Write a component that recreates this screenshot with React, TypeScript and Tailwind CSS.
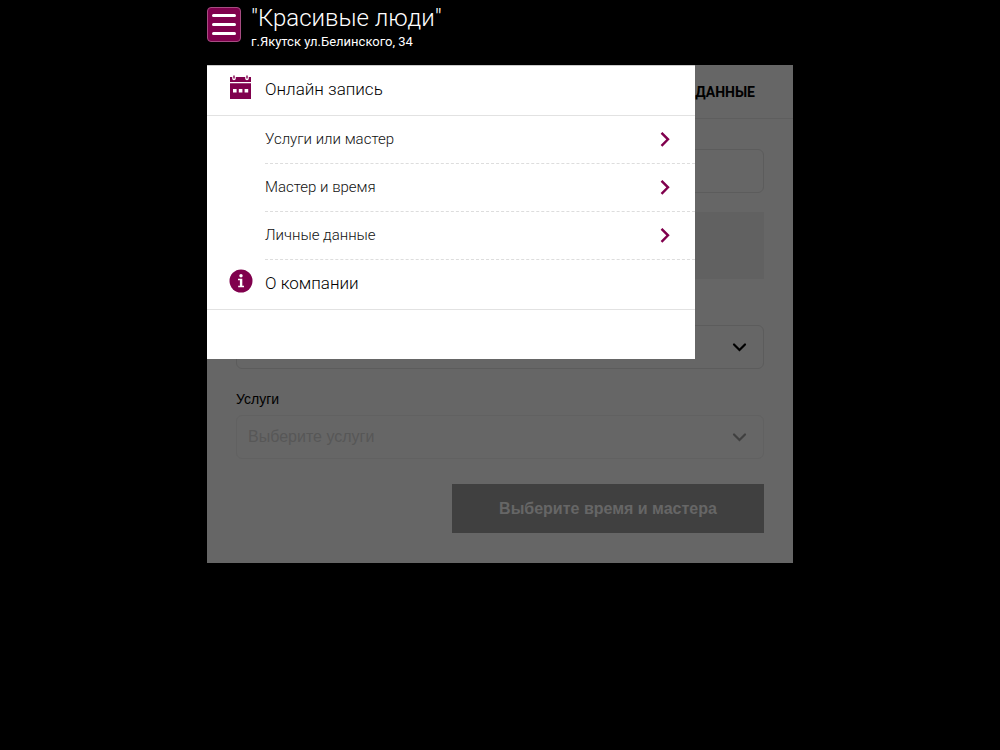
import React from 'react';

const menuSteps = ['Услуги или мастер', 'Мастер и время', 'Личные данные'];

const CalendarIcon = () => (
  <svg className="h-6 w-6 shrink-0" viewBox="0 0 24 24" aria-hidden="true">
    <path fill="#80004d" d="M1 2h2.200v1.500a1.800 1.800 0 0 0 3.600 0V2h9.400v1.500a1.800 1.800 0 0 0 3.600 0V2H22v5H1zM1 8.200h21V24H1z" />
    <path fill="#80004d" d="M4.300.5h1.400v3H4.300zM17.300.5h1.400v3h-1.400z" />
    <path fill="#fff" d="M4 14h3.600v3.600H4zM9.800 14h3.600v3.600H9.800zM15.600 14h3.600v3.600h-3.600z" />
  </svg>
);

const InfoIcon = () => (
  <svg className="h-6 w-6 shrink-0" viewBox="0 0 24 24" aria-hidden="true">
    <circle cx="12" cy="12" r="11.500" fill="#80004d" />
    <circle cx="12" cy="6.800" r="1.700" fill="#fff" />
    <path fill="#fff" d="M9 9.800h4.300v7h1.700V18.300H9.200v-1.500h1.700v-5.500H9z" />
  </svg>
);

const ChevronRight = () => (
  <svg className="h-4 w-3 shrink-0" viewBox="0 0 12 16" fill="none" aria-hidden="true">
    <path d="M2.500.8 9 7.300l-6.500 6.500" stroke="#80004d" strokeWidth="2.400" />
  </svg>
);

const ChevronDown = ({ className }: { className: string }) => (
  <svg
    className={`pointer-events-none absolute top-1/2 right-4 h-4 w-4 -translate-y-1/2 ${className}`}
    viewBox="0 0 16 16"
    fill="none"
    aria-hidden="true"
  >
    <path d="m2 5.500 5.500 5.500L13 5.500" stroke="currentColor" strokeWidth="2.200" strokeLinecap="round" />
  </svg>
);

const SideMenu = () => (
  <nav className="absolute top-0 left-0 w-5/6 border-t border-[#ccc] bg-white pb-[49px]">
    <a href="#booking" className="flex h-[50px] items-start gap-3 border-b border-[#e2e2e2] pt-[9px] pl-[22px] text-[17px] leading-7 text-black">
      <CalendarIcon />
      Онлайн запись
    </a>
    <ul className="pl-[58px]">
      {menuSteps.map((step) => (
        <li key={step}>
          <a
            href="#step"
            className="flex h-12 items-center justify-between border-b border-dashed border-[#ddd] pr-6 text-[15px] text-[#111]"
          >
            {step}
            <ChevronRight />
          </a>
        </li>
      ))}
    </ul>
    <a href="#about" className="flex h-[50px] items-start gap-3 border-b border-[#e2e2e2] pt-[9px] pl-[22px] text-[17px] leading-7 text-black">
      <InfoIcon />
      О компании
    </a>
  </nav>
);

export default function App() {
  return (
    <div className="min-h-screen bg-black font-[Roboto,sans-serif] font-light">
      <div className="mx-auto max-w-[586px]">
        <header className="flex h-[65px] items-start gap-[10px] pt-[7px] text-white">
          <button
            type="button"
            aria-label="Меню"
            className="flex h-[35px] w-[34px] shrink-0 flex-col items-center justify-center gap-[6px] rounded border border-[#a64d82] bg-[#80004d]"
          >
            <span className="h-[3px] w-6 rounded-full bg-white" />
            <span className="h-[3px] w-6 rounded-full bg-white" />
            <span className="h-[3px] w-6 rounded-full bg-white" />
          </button>
          <div className="-mt-[3px]">
            <h1 className="text-2xl leading-7">"Красивые люди"</h1>
            <p className="text-[13px] leading-5 font-normal">г.Якутск ул.Белинского, 34</p>
          </div>
        </header>

        <main className="relative bg-[#666]">
          <div className="flex h-[54px] items-center justify-end border-b border-[#5e5e5e] pr-[38px] text-sm font-bold text-black">
            ДАННЫЕ
          </div>

          <form className="px-[29px] py-[30px] font-[Liberation_Sans,sans-serif] font-normal">
            <input
              type="text"
              aria-label="Имя"
              className="block h-11 w-full rounded-md border border-[#5c5c5c] px-3"
            />
            <div className="mt-[19px] h-[67px] bg-[#616161]" />
            <div className="relative mt-[46px]">
              <select aria-label="Мастер" className="block h-11 w-full appearance-none rounded-md border border-[#5c5c5c] px-3" />
              <ChevronDown className="text-black" />
            </div>

            <label htmlFor="services" className="mt-5 block text-sm leading-5 text-black">
              Услуги
            </label>
            <div className="relative mt-[6px]">
              <select
                id="services"
                disabled
                className="block h-11 w-full appearance-none rounded-md border border-[#616161] px-[11px] text-base text-[#575757] opacity-100"
              >
                <option>Выберите услуги</option>
              </select>
              <ChevronDown className="text-[#404040]" />
            </div>

            <button
              type="button"
              disabled
              className="mt-[25px] ml-auto block h-[49px] w-[312px] max-w-full bg-[#404040] text-base font-bold text-[#666]"
            >
              Выберите время и мастера
            </button>
          </form>

          <SideMenu />
        </main>
      </div>
    </div>
  );
}
